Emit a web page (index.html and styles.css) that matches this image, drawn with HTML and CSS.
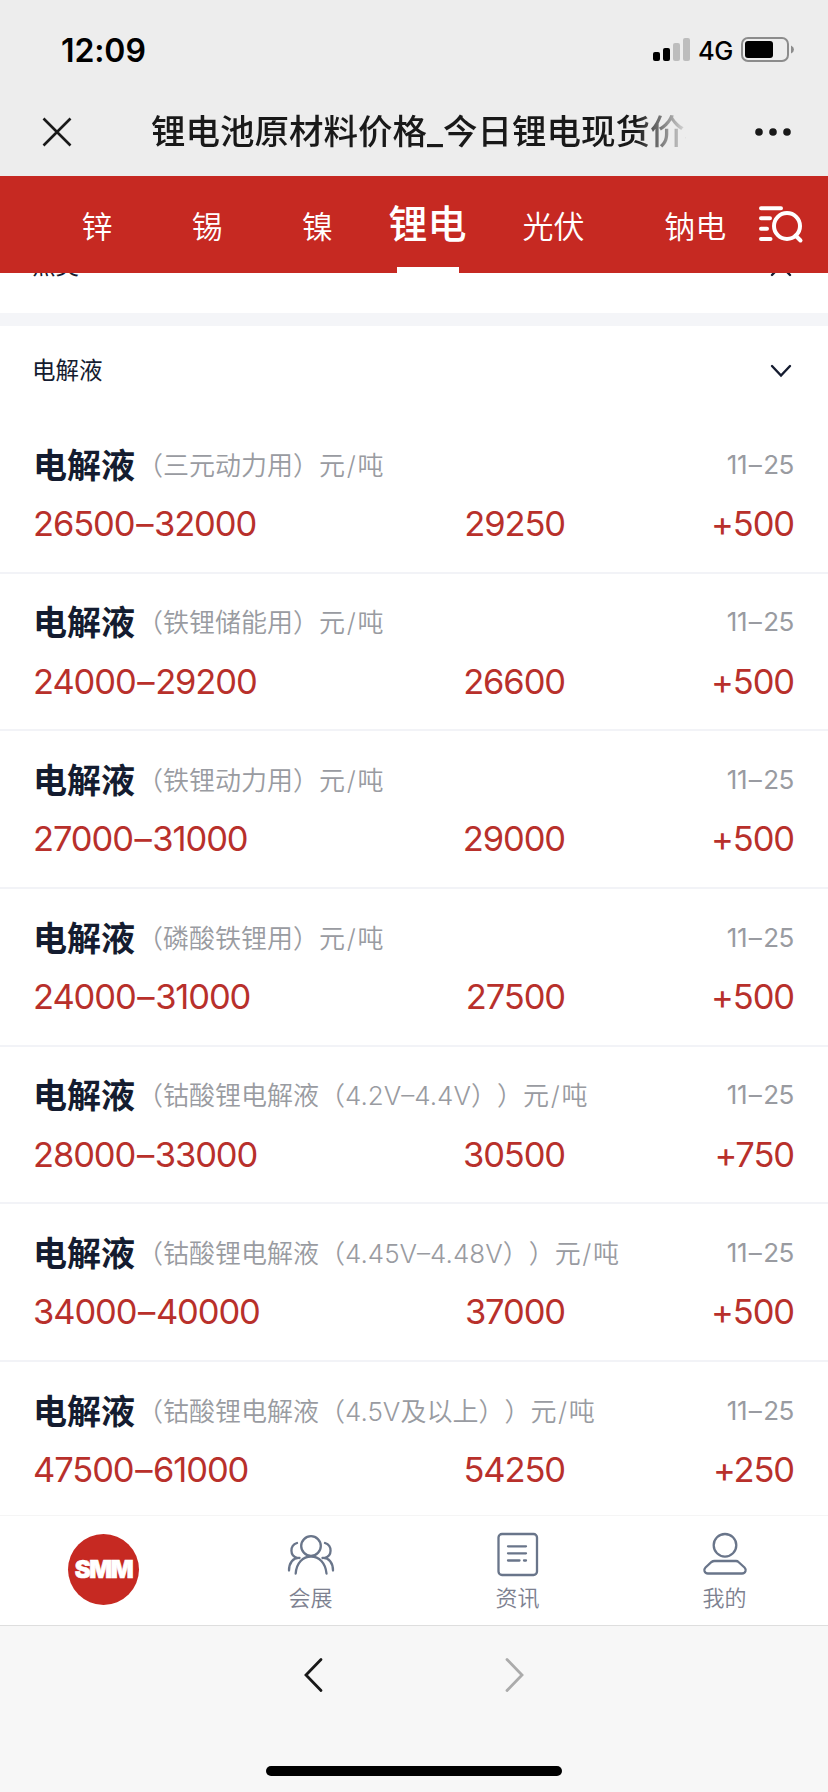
FILE: index.html
```html
<!DOCTYPE html>
<html lang="zh-CN">
<head>
  <meta charset="UTF-8" />
  <meta name="viewport" content="width=device-width, initial-scale=1.0" />
  <title>锂电池原材料价格_今日锂电现货价格</title>
  <link rel="stylesheet" href="styles.css">
</head>
<body>
  <div class="status-bar">
    <span class="time">12:09</span>
    <div class="status-icons">
      <svg class="signal" width="38" height="24" viewBox="0 0 38 24">
        <rect x="0" y="14" width="7" height="9" rx="2" />
        <rect x="10" y="10" width="7" height="13" rx="2" />
        <rect class="off" x="20" y="5" width="7" height="18" rx="2" />
        <rect class="off" x="30" y="0" width="7" height="23" rx="2" />
      </svg>
      <span class="network">4G</span>
      <svg class="battery" width="54" height="26" viewBox="0 0 54 26">
        <rect x="1" y="1" width="46" height="23" rx="6" fill="none" stroke="#8c8c8c" stroke-width="2" />
        <rect x="4" y="4" width="28" height="17" rx="3" />
        <path d="M50 8.5 Q53 10 53 12.5 Q53 15 50 16.5 Z" fill="#8c8c8c" />
      </svg>
    </div>
  </div>

  <div class="title-bar">
    <svg class="close" width="30" height="30" viewBox="0 0 30 30"><path d="M1.5 1.5 L28.5 28.5 M28.5 1.5 L1.5 28.5" /></svg>
    <div class="page-title">锂电池原材料价格_今日锂电现货价格</div>
    <svg class="more" width="38" height="10" viewBox="0 0 38 10"><circle cx="5" cy="5" r="3.8" /><circle cx="19" cy="5" r="3.8" /><circle cx="33" cy="5" r="3.8" /></svg>
  </div>

  <nav class="metal-nav">
    <a>锌</a>
    <a>锡</a>
    <a>镍</a>
    <a class="active">锂电</a>
    <a class="wide">光伏</a>
    <a class="wide last">钠电</a>
    <svg class="search" width="46" height="40" viewBox="0 0 46 40">
      <path d="M3 4.2 H23 M3 14.3 H12 M3 24.7 H9 M3 35 H12.5" />
      <circle cx="29" cy="22" r="13" />
      <path d="M37.5 31.5 L42.5 36.5" />
    </svg>
  </nav>

  <main class="content">
    <div class="group-head folded">
      <span>焦类</span>
      <svg width="22" height="14" viewBox="0 0 22 14"><path d="M2 12 L11 2.5 L20 12" /></svg>
    </div>
    <div class="group-head">
      <span>电解液</span>
      <svg width="22" height="14" viewBox="0 0 22 14"><path d="M2 2 L11 11.5 L20 2" /></svg>
    </div>

    <div class="price-row">
      <div class="line"><b>电解液</b><span class="spec">（三元动力用）元<em>/</em>吨</span><span class="date">11<em>–</em>25</span></div>
      <div class="values"><span>26500<em>–</em>32000</span><span>29250</span><span>+500</span></div>
    </div>
    <div class="price-row">
      <div class="line"><b>电解液</b><span class="spec">（铁锂储能用）元<em>/</em>吨</span><span class="date">11<em>–</em>25</span></div>
      <div class="values"><span>24000<em>–</em>29200</span><span>26600</span><span>+500</span></div>
    </div>
    <div class="price-row">
      <div class="line"><b>电解液</b><span class="spec">（铁锂动力用）元<em>/</em>吨</span><span class="date">11<em>–</em>25</span></div>
      <div class="values"><span>27000<em>–</em>31000</span><span>29000</span><span>+500</span></div>
    </div>
    <div class="price-row">
      <div class="line"><b>电解液</b><span class="spec">（磷酸铁锂用）元<em>/</em>吨</span><span class="date">11<em>–</em>25</span></div>
      <div class="values"><span>24000<em>–</em>31000</span><span>27500</span><span>+500</span></div>
    </div>
    <div class="price-row">
      <div class="line"><b>电解液</b><span class="spec">（钴酸锂电解液（4.2V–4.4V））元<em>/</em>吨</span><span class="date">11<em>–</em>25</span></div>
      <div class="values"><span>28000<em>–</em>33000</span><span>30500</span><span>+750</span></div>
    </div>
    <div class="price-row">
      <div class="line"><b>电解液</b><span class="spec">（钴酸锂电解液（4.45V–4.48V））元<em>/</em>吨</span><span class="date">11<em>–</em>25</span></div>
      <div class="values"><span>34000<em>–</em>40000</span><span>37000</span><span>+500</span></div>
    </div>
    <div class="price-row">
      <div class="line"><b>电解液</b><span class="spec">（钴酸锂电解液（4.5V及以上））元<em>/</em>吨</span><span class="date">11<em>–</em>25</span></div>
      <div class="values"><span>47500<em>–</em>61000</span><span>54250</span><span>+250</span></div>
    </div>
  </main>

  <footer class="tab-bar">
    <a><span class="logo"><i>SMM</i></span></a>
    <a>
      <svg width="50" height="46" viewBox="0 0 50 46">
        <circle cx="25" cy="15" r="9.8" />
        <path d="M9.7 42.5 C10.5 32 17 25.5 25 25.5 S39.5 32 40.5 42.5" />
        <path d="M11 12 C3.5 14.5 3.5 25 11.5 27 M13.5 27 C7 26.5 3 32 3 39.5" />
        <path d="M39 12 C46.5 14.5 46.5 25 38.5 27 M36.5 27 C43 26.5 47 32 47 39.5" />
      </svg>
      <span>会展</span>
    </a>
    <a>
      <svg width="50" height="46" viewBox="0 0 50 46">
        <rect x="5.5" y="3" width="38.5" height="41" rx="3.5" />
        <path d="M15 15.3 H33 M15 22.3 H33 M15 29.5 H26.5 M31 29.5 H33" />
      </svg>
      <span>资讯</span>
    </a>
    <a>
      <svg width="50" height="46" viewBox="0 0 50 46">
        <circle cx="25" cy="14.3" r="11.3" />
        <path d="M14.5 30 H36 Q37.5 30 38.5 31 L44.5 36.5 Q46 38 45.5 40 Q44.8 42.5 42 42.5 H8 Q5.2 42.5 4.5 40 Q4 38 5.5 36.5 L11.5 31 Q12.8 30 14.5 30 Z" />
      </svg>
      <span>我的</span>
    </a>
  </footer>

  <div class="browser-bar">
    <div class="history">
      <svg width="20" height="36" viewBox="0 0 20 36"><path d="M18 2.5 L3 18 L18 33.5" /></svg>
      <svg class="disabled" width="20" height="36" viewBox="0 0 20 36"><path d="M2 2.5 L17 18 L2 33.5" /></svg>
    </div>
    <div class="home-indicator"></div>
  </div>
</body>
</html>
```
FILE: styles.css
```css
* { box-sizing: border-box; }
body {
  margin: 0;
  width: 828px;
  height: 1792px;
  overflow: hidden;
  display: flex;
  flex-direction: column;
  background: #fff;
  font-family: Inter, "Noto Sans CJK SC", sans-serif;
  text-spacing-trim: space-all;
}
svg { display: block; flex: none; }

/* phone status + title */
.status-bar {
  height: 88px;
  padding: 12px 33px 0 61px;
  display: flex;
  align-items: center;
  justify-content: space-between;
  background: #ededed;
}
.time { font-size: 32px; font-weight: 600; letter-spacing: -0.1px; }
.status-icons { display: flex; align-items: center; }
.signal .off { fill: #bdbdbd; }
.network { margin: 0 8px 0 7px; font-size: 25.5px; font-weight: 500; letter-spacing: -0.4px; }
.title-bar {
  height: 88px;
  padding: 0 36px 0 42px;
  display: flex;
  align-items: center;
  background: #ededed;
}
.close { stroke: #191919; stroke-width: 2.6; }
.page-title {
  width: 535px;
  margin: 0 auto 0 79px;
  overflow: hidden;
  white-space: nowrap;
  font-size: 34.5px;
  font-weight: 500;
  line-height: 50px;
  color: #191919;
  -webkit-mask-image: linear-gradient(to right, #000 485px, transparent 540px);
  mask-image: linear-gradient(to right, #000 485px, transparent 540px);
}
.more { fill: #191919; }

.metal-nav {
  height: 97px;
  padding: 0 24px 0 42px;
  display: flex;
  align-items: stretch;
  background: #c62922;
  color: #fff;
}
.metal-nav a {
  width: 110.4px;
  padding-top: 2px;
  font-size: 31px;
  font-weight: 350;
  line-height: 97px;
  text-align: center;
}
.metal-nav .wide { width: 142px; }
.metal-nav .last { width: 134px; padding-right: 0; text-indent: 8px; }
.metal-nav .active {
  display: flex;
  flex-direction: column;
  align-items: center;
  padding-top: 5px;
  font-size: 39px;
  font-weight: 500;
  line-height: 86px;
}
.metal-nav .active::after { content: ""; width: 62px; height: 6px; background: #fff; }
.search { margin-top: 28px; fill: none; stroke: #fff; stroke-width: 4; stroke-linecap: round; }

/* price list */
.content { height: 1242px; overflow: hidden; }
.group-head {
  height: 90px;
  padding: 0 36px 4px 32px;
  display: flex;
  align-items: center;
  justify-content: space-between;
  font-size: 23.5px;
  color: #151c30;
}
.group-head svg { margin-top: 4px; fill: none; stroke: #151c30; stroke-width: 2.4; stroke-linecap: round; }
.group-head.folded {
  height: 105px;
  margin-top: -52px;
  padding-bottom: 6px;
  border-bottom: 13px solid #f4f5f8;
}
.group-head.folded svg { margin-top: 12px; }
.price-row {
  height: 157.7px;
  padding: 22px 34px 0;
  border-bottom: 2px solid #f2f3f7;
}
.price-row em { margin: 0 1.7px; font-style: normal; }
.line { display: flex; align-items: center; height: 50px; margin-bottom: 3px; white-space: nowrap; }
.line b { margin-left: -1px; font-size: 34px; color: #141c30; }
.spec, .date { font-size: 26px; font-weight: 350; color: #999ba1; }
.spec { margin-left: 2px; }
.date { margin-left: auto; padding-top: 2px; font-weight: 400; letter-spacing: -0.4px; }
.values {
  display: grid;
  grid-template-columns: 300px 231px 1fr;
  font-size: 34.5px;
  line-height: 66px;
  letter-spacing: -1.1px;
  color: #b8302b;
}
.values span:first-child { margin-left: -1px; }
.values span + span { text-align: right; }

.tab-bar {
  height: 111px;
  display: grid;
  grid-template-columns: repeat(4, 1fr);
  border-top: 1px solid #f5f5f5;
  border-bottom: 1px solid #dedede;
  font-size: 22px;
  font-weight: 350;
  color: #7d8190;
}
.tab-bar a { display: flex; flex-direction: column; align-items: center; padding-top: 15px; line-height: 40px; }
.tab-bar svg { margin-bottom: 1px; fill: none; stroke: #69758a; stroke-width: 2.3; stroke-linecap: round; }
.logo {
  width: 71px;
  height: 71px;
  margin-top: 3px;
  display: flex;
  align-items: center;
  justify-content: center;
  border-radius: 50%;
  background: #c62922;
  color: #fff;
}
.logo i { font-size: 24px; font-weight: 900; font-style: normal; letter-spacing: -1.4px; -webkit-text-stroke: 0.6px #fff; }

.browser-bar {
  flex: 1;
  padding-top: 31px;
  background: #f7f7f7;
}
.history { display: flex; justify-content: center; gap: 182px; }
.history svg { fill: none; stroke: #191919; stroke-width: 2.8; stroke-linecap: round; }
.history .disabled { stroke: #ababab; }
.home-indicator { width: 296px; height: 10px; margin: 73px auto 0; border-radius: 5px; background: #000; }
```
